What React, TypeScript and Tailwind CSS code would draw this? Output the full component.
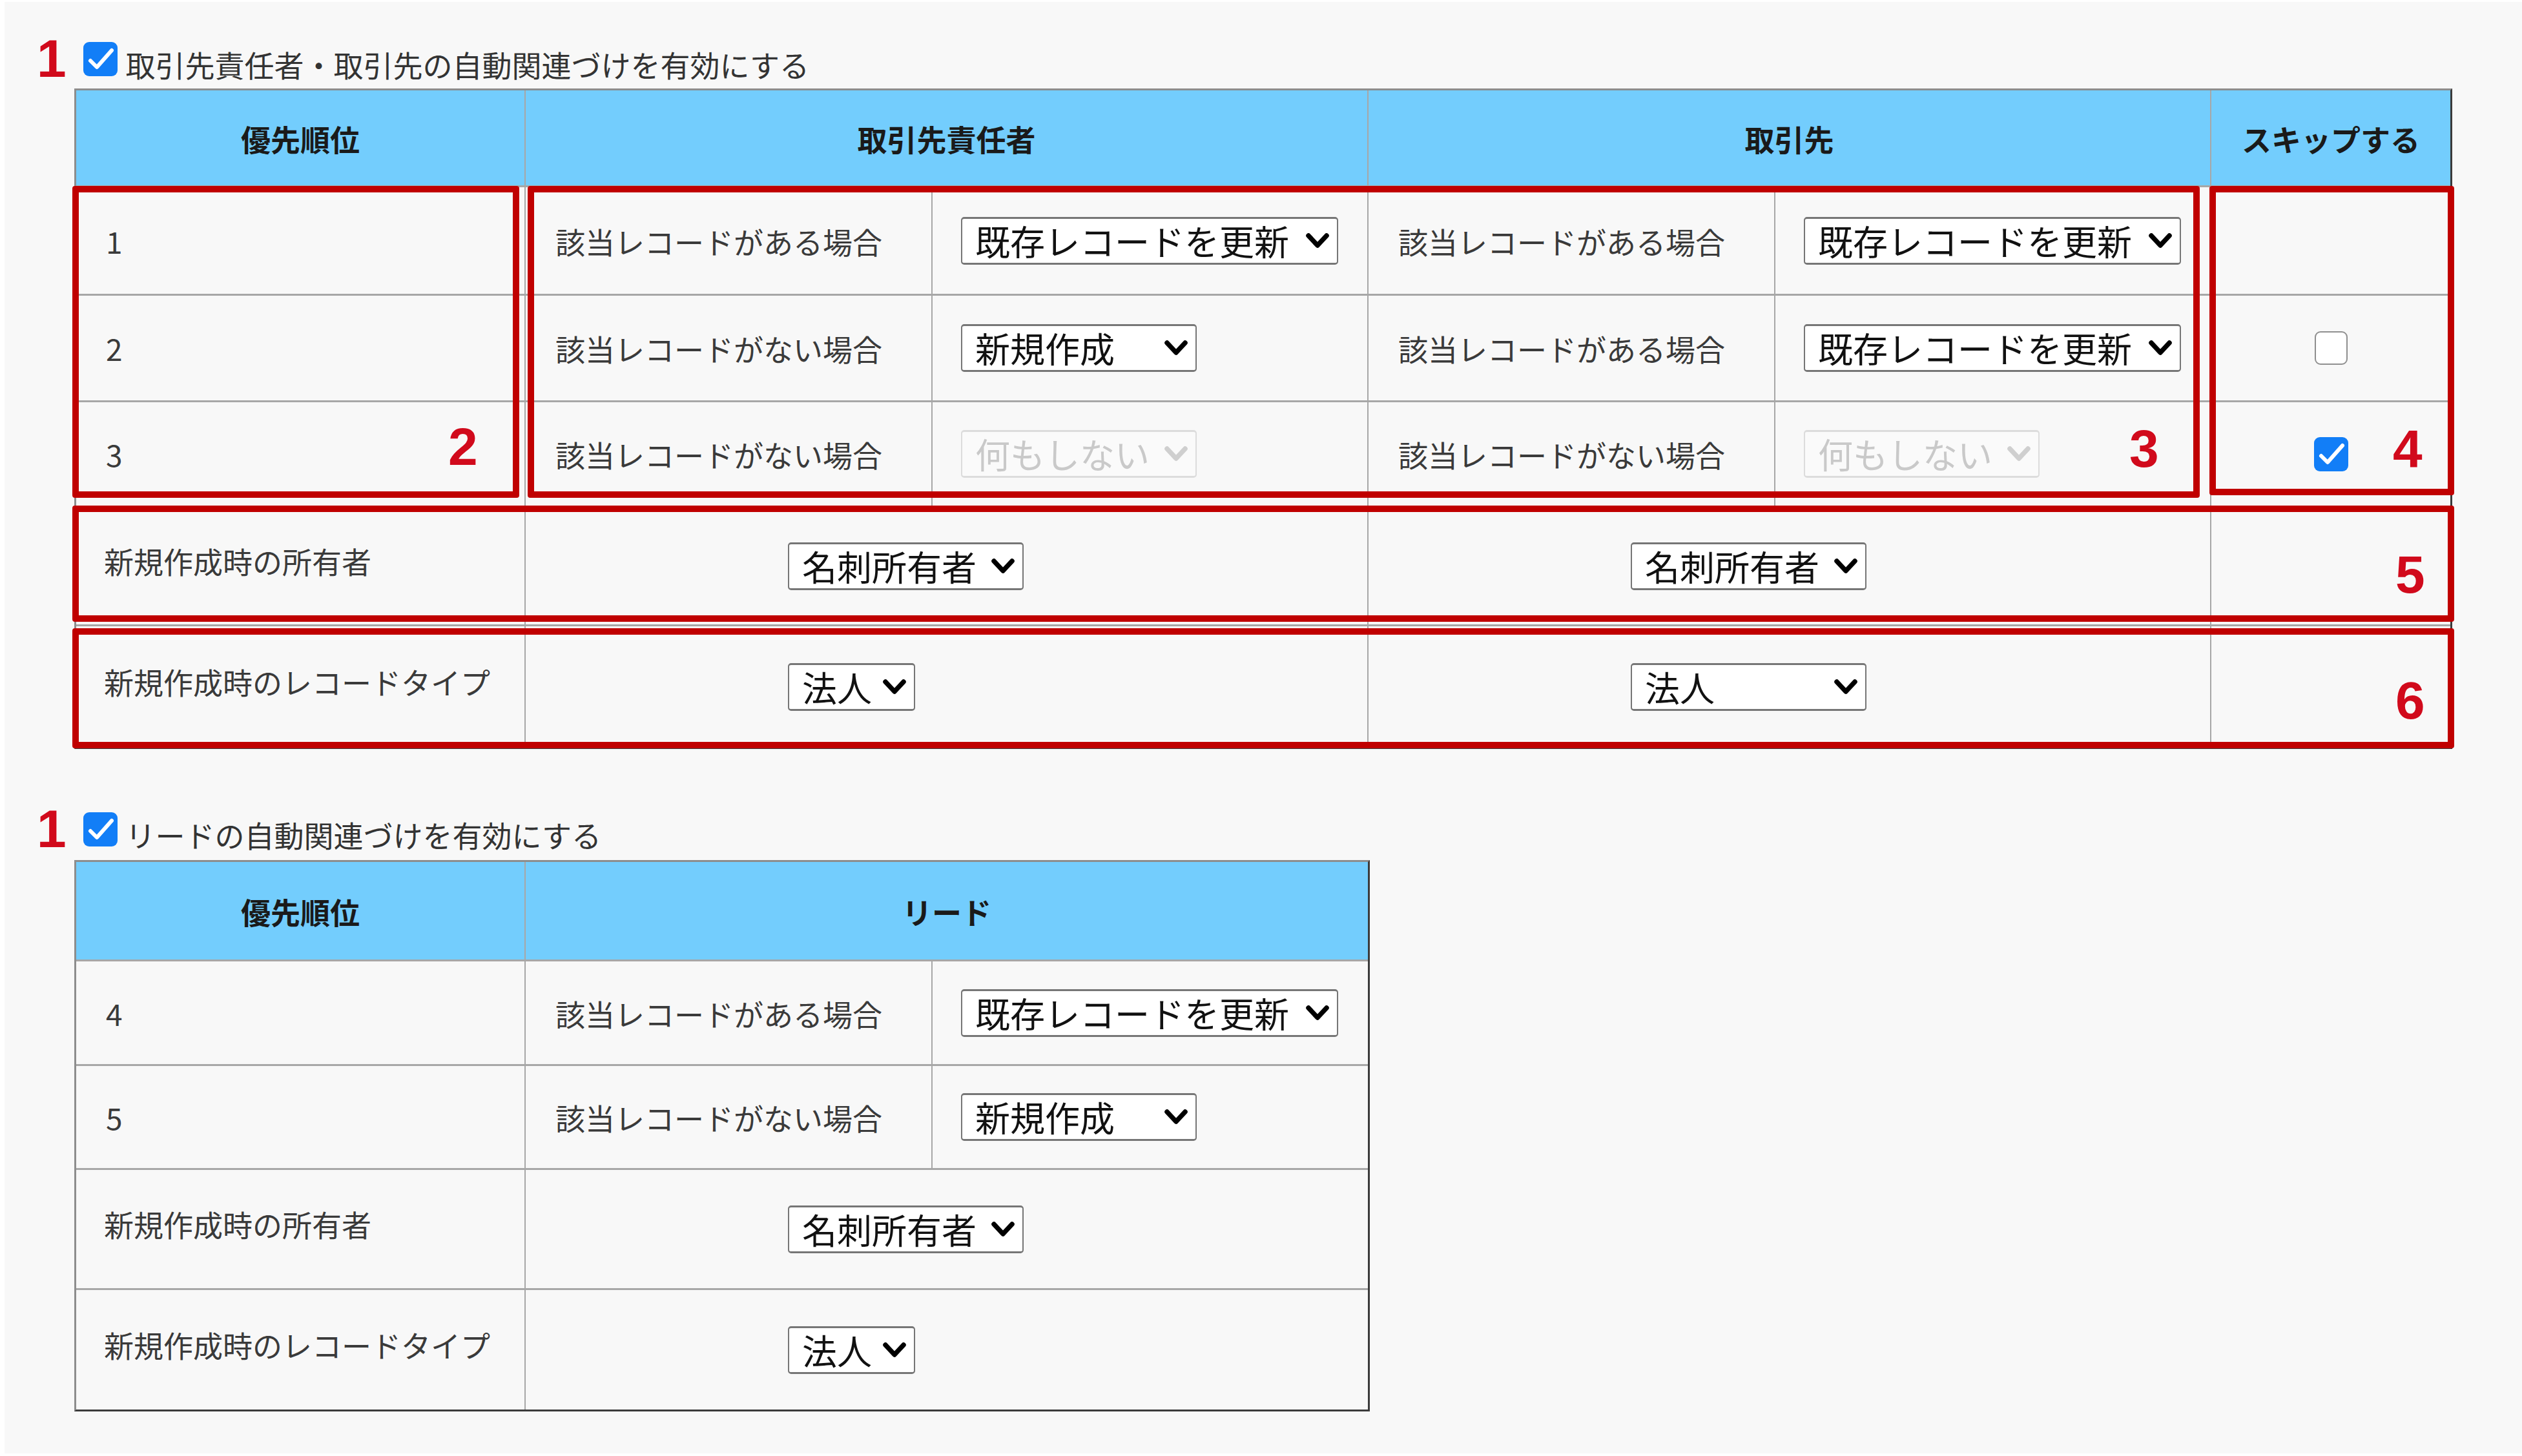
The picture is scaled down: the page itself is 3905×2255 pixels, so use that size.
import clsx from 'clsx';

const jp = "font-['Noto_Sans_CJK_JP','Noto_Sans',sans-serif]";
const mark = "font-['Liberation_Sans',Arial,sans-serif] font-bold text-[82px] leading-none text-[#d10a1c]";

function Chevron({ muted }: { muted?: boolean }) {
	return (
		<svg
			aria-hidden="true"
			className={clsx('h-[28px] w-[40px]', muted ? 'text-[#cfcfcf]' : 'text-black')}
			fill="none"
			stroke="currentColor"
			viewBox="0 0 40 28"
		>
			<path d="M6 6l14 15L34 6" strokeLinecap="round" strokeLinejoin="round" strokeWidth={7.5} />
		</svg>
	);
}

function Select({ value, className, disabled }: { value: string; className: string; disabled?: boolean }) {
	return (
		<div
			className={clsx(
				'flex h-[74px] items-center justify-between rounded-[5px] border-x-2 border-y-[3px] pl-[20px] pr-[10px] text-[54px] leading-none',
				disabled ? 'border-[#dcdcdc] bg-[#fafafa] text-[#c9c9c9]' : 'border-[#767676] bg-white text-[#111]',
				className,
			)}
		>
			<span>{value}</span>
			<Chevron muted={disabled} />
		</div>
	);
}

function Checkbox({ checked }: { checked: boolean }) {
	if (!checked) {
		return <div className="h-[52px] w-[51px] rounded-[9px] border-2 border-[#8f8f8f] bg-white" />;
	}
	return (
		<div className="flex h-[53px] w-[53px] items-center justify-center rounded-[9px] bg-[#127ef7]">
			<svg aria-hidden="true" className="h-[53px] w-[53px]" fill="none" stroke="white" viewBox="0 0 53 53">
				<path d="M11 29l10 10 23-26" strokeLinecap="round" strokeLinejoin="round" strokeWidth={6} />
			</svg>
		</div>
	);
}

function EnableRow({ label }: { label: string }) {
	return (
		<div className="flex h-[62px] items-center">
			<span className={clsx(mark, 'ml-[50px]')}>1</span>
			<div className="ml-[26px]">
				<Checkbox checked />
			</div>
			<span className="ml-[13px] pt-[16px] text-[46px] leading-none text-[#333]">{label}</span>
		</div>
	);
}

const head = 'flex items-center justify-center border-[#a7a7a7] bg-[#73cdfd] text-[46px] font-bold leading-none text-[#1a1a1a]';
const cell = 'flex items-center border-[#a7a7a7] text-[46px] leading-none text-[#3a3a3a]';

type Pair = { cond: string; value: string; wide?: boolean; disabled?: boolean };

const mainRows: { n: string; a: Pair; b: Pair; skip: boolean | null }[] = [
	{
		n: '1',
		a: { cond: '該当レコードがある場合', value: '既存レコードを更新', wide: true },
		b: { cond: '該当レコードがある場合', value: '既存レコードを更新', wide: true },
		skip: null,
	},
	{
		n: '2',
		a: { cond: '該当レコードがない場合', value: '新規作成' },
		b: { cond: '該当レコードがある場合', value: '既存レコードを更新', wide: true },
		skip: false,
	},
	{
		n: '3',
		a: { cond: '該当レコードがない場合', value: '何もしない', disabled: true },
		b: { cond: '該当レコードがない場合', value: '何もしない', disabled: true },
		skip: true,
	},
];

function PairCells({ p }: { p: Pair }) {
	return (
		<>
			<div className={clsx(cell, 'border-b-[3px] border-r-2 pl-[46px]')}>{p.cond}</div>
			<div className={clsx(cell, 'border-b-[3px] border-r-2 pl-[44px]')}>
				<Select className={p.wide ? 'w-[584px]' : 'w-[365px]'} disabled={p.disabled} value={p.value} />
			</div>
		</>
	);
}

export default function App() {
	return (
		<div className={clsx(jp, 'relative h-[2255px] w-[3905px] bg-white pb-[4px] pl-[7px] pt-[3px]')}>
			<div className="h-full bg-[#f8f8f8] pt-[57px]">
				{/* contacts + accounts */}
				<section>
					<EnableRow label="取引先責任者・取引先の自動関連づけを有効にする" />
					<div className="ml-[108px] mt-[15px] grid w-[3682px] grid-cols-[696px_630px_675px_630px_675px_370px] grid-rows-[150px_168px_165px_163px_184px_187px] border-[3px] border-b-[#3b3b3b] border-l-[#8d8d8d] border-r-[#3b3b3b] border-t-[#8d8d8d]">
						<div className={clsx(head, 'border-b-[3px] border-r-2')}>優先順位</div>
						<div className={clsx(head, 'col-span-2 border-b-[3px] border-r-2')}>取引先責任者</div>
						<div className={clsx(head, 'col-span-2 border-b-[3px] border-r-2')}>取引先</div>
						<div className={clsx(head, 'border-b-[3px]')}>スキップする</div>

						{mainRows.map((r) => (
							<div className="contents" key={r.n}>
								<div className={clsx(cell, 'border-b-[3px] border-r-2 pl-[46px]')}>{r.n}</div>
								<PairCells p={r.a} />
								<PairCells p={r.b} />
								<div className={clsx(cell, 'justify-center border-b-[3px]')}>
									{r.skip !== null && <Checkbox checked={r.skip} />}
								</div>
							</div>
						))}

						<div className={clsx(cell, 'border-b-[3px] border-r-2 pb-[18px] pl-[43px]')}>新規作成時の所有者</div>
						<div className={clsx(cell, 'col-span-2 border-b-[3px] border-r-2 pl-[406px]')}>
							<Select className="w-[365px]" value="名刺所有者" />
						</div>
						<div className={clsx(cell, 'col-span-2 border-b-[3px] border-r-2 pl-[406px]')}>
							<Select className="w-[365px]" value="名刺所有者" />
						</div>
						<div className={clsx(cell, 'border-b-[3px]')} />

						<div className={clsx(cell, 'border-r-2 pb-[18px] pl-[43px]')}>新規作成時のレコードタイプ</div>
						<div className={clsx(cell, 'col-span-2 border-r-2 pl-[406px]')}>
							<Select className="w-[197px]" value="法人" />
						</div>
						<div className={clsx(cell, 'col-span-2 border-r-2 pl-[406px]')}>
							<Select className="w-[365px]" value="法人" />
						</div>
						<div className={cell} />
					</div>
				</section>

				{/* leads */}
				<section className="mt-[93px]">
					<EnableRow label="リードの自動関連づけを有効にする" />
					<div className="ml-[108px] mt-[17px] grid w-[2006px] grid-cols-[696px_630px_674px] grid-rows-[154px_162px_161px_186px_185px] border-[3px] border-b-[#3b3b3b] border-l-[#8d8d8d] border-r-[#3b3b3b] border-t-[#8d8d8d]">
						<div className={clsx(head, 'border-b-[3px] border-r-2')}>優先順位</div>
						<div className={clsx(head, 'col-span-2 border-b-[3px]')}>リード</div>

						<div className={clsx(cell, 'border-b-[3px] border-r-2 pl-[46px]')}>4</div>
						<div className={clsx(cell, 'border-b-[3px] border-r-2 pl-[46px]')}>該当レコードがある場合</div>
						<div className={clsx(cell, 'border-b-[3px] pl-[44px]')}>
							<Select className="w-[584px]" value="既存レコードを更新" />
						</div>

						<div className={clsx(cell, 'border-b-[3px] border-r-2 pl-[46px]')}>5</div>
						<div className={clsx(cell, 'border-b-[3px] border-r-2 pl-[46px]')}>該当レコードがない場合</div>
						<div className={clsx(cell, 'border-b-[3px] pl-[44px]')}>
							<Select className="w-[365px]" value="新規作成" />
						</div>

						<div className={clsx(cell, 'border-b-[3px] border-r-2 pb-[18px] pl-[43px]')}>新規作成時の所有者</div>
						<div className={clsx(cell, 'col-span-2 border-b-[3px] pl-[406px]')}>
							<Select className="w-[365px]" value="名刺所有者" />
						</div>

						<div className={clsx(cell, 'border-r-2 pb-[18px] pl-[43px]')}>新規作成時のレコードタイプ</div>
						<div className={clsx(cell, 'col-span-2 pl-[406px]')}>
							<Select className="w-[197px]" value="法人" />
						</div>
					</div>
				</section>
			</div>

			{/* annotation frames */}
			<div className="absolute left-[112px] top-[288px] h-[483px] w-[692px] rounded-[4px] border-[10px] border-[#c00000]" />
			<div className="absolute left-[817px] top-[288px] h-[483px] w-[2589px] rounded-[4px] border-[10px] border-[#c00000]" />
			<div className="absolute left-[3421px] top-[288px] h-[479px] w-[379px] rounded-[4px] border-[10px] border-[#c00000]" />
			<div className="absolute left-[112px] top-[783px] h-[180px] w-[3688px] rounded-[4px] border-[10px] border-[#c00000]" />
			<div className="absolute left-[112px] top-[973px] h-[186px] w-[3688px] rounded-[4px] border-[10px] border-[#c00000]" />

			<span className={clsx(mark, 'absolute left-[694px] top-[651px]')}>2</span>
			<span className={clsx(mark, 'absolute left-[3297px] top-[654px]')}>3</span>
			<span className={clsx(mark, 'absolute left-[3705px] top-[654px]')}>4</span>
			<span className={clsx(mark, 'absolute left-[3709px] top-[849px]')}>5</span>
			<span className={clsx(mark, 'absolute left-[3709px] top-[1044px]')}>6</span>
		</div>
	);
}
